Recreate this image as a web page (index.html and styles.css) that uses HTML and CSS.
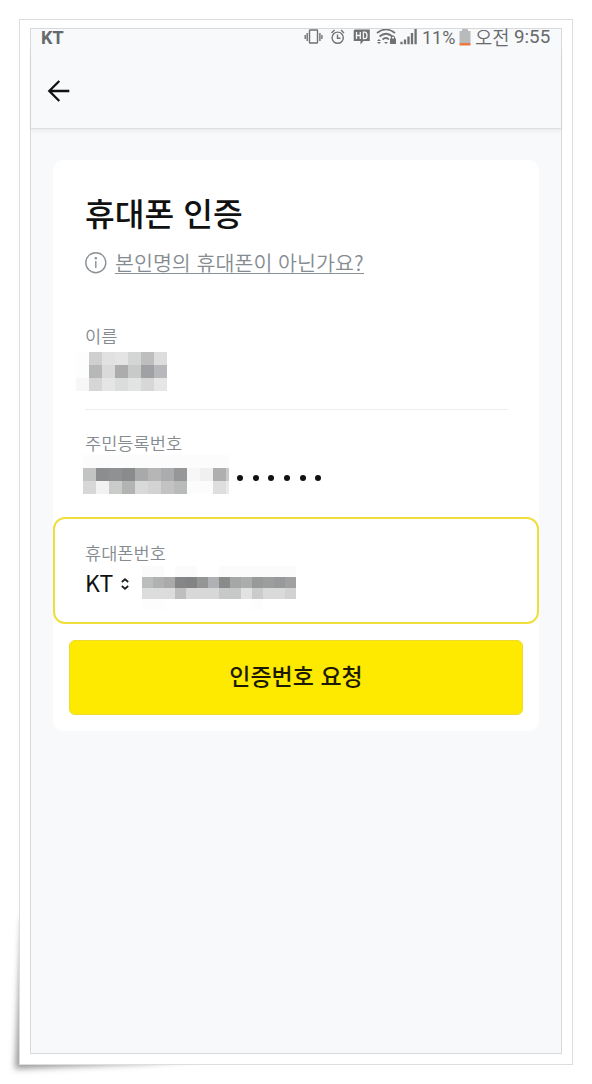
FILE: index.html
```html
<!DOCTYPE html>
<html lang="ko">
<head>
<meta charset="utf-8">
<meta name="viewport" content="width=device-width">
<title>휴대폰 인증</title>
<link rel="stylesheet" href="styles.css">
</head>
<body>
<div class="paper">
  <svg class="curl" width="260" height="184" viewBox="0 0 260 184" aria-hidden="true">
    <defs><filter id="soft" x="-20%" y="-20%" width="140%" height="140%"><feGaussianBlur stdDeviation="3"/></filter></defs>
    <path d="M22 15L15 169L150 163L200 158L30 30Z" fill="#999" filter="url(#soft)"/>
  </svg>
  <div class="mat">
    <main class="screen">
      <div class="status">
        <span class="carrier">KT</span>
        <svg class="status-icons" width="116" height="18" viewBox="0 0 116 18" fill="none" stroke="#707173" stroke-width="1.4" aria-hidden="true">
          <rect x="5.5" y="1" width="8" height="13" rx=".5"/><path d="M3.2 4v8M1.2 6v4M15.9 4v8M17.9 6v4"/>
          <circle cx="33.7" cy="8.7" r="5.6"/><path d="M33.5 5.5v3.8h3M27.5 4l3-3M37 1l3 3"/>
          <path d="M50.7 .5H65.8V12H59.5L56.5 15.5V12H49.7V1.5Z" fill="#707173" stroke="none"/>
          <path d="M52.5 3v7M56.3 3v7M52.5 6.5H56.3M59.4 3.2V9.7H60.6Q63 9.7 63 6.5T60.6 3.2Z" stroke="#f5f6f8" stroke-width="1.3"/>
          <path d="M73 4Q82-3 91 4M75.5 7.5Q82 2 88.5 7.5M78.5 10.5Q82 7.5 85 10.5" stroke-width="1.7"/>
          <path d="M80 13L82 15L84 13ZM75 10l2 2h-4ZM75 15l-2-2h4Z" fill="#707173" stroke="none"/>
          <rect x="86" y="9.5" width="6" height="5.5" fill="#707173" stroke="none"/><path d="M87.5 10V8Q89 6 90.5 8V10" stroke-width="1.1"/>
          <path d="M97.5 15.2v-2.5M101 15.2v-4.7M104.5 15.2V7.5M108 15.2V4M111.6 15.2V0" stroke-width="2.3"/>
        </svg>
        <span class="percent">11%</span>
        <svg class="battery" width="12" height="17" viewBox="0 0 12 17" aria-hidden="true"><path d="M.5 2H3V0H9V2H11.5V14H.5Z" fill="#b9babc"/><path d="M.5 14H11.5V16.5H.5Z" fill="#e9793d"/></svg>
        <span class="meridiem">오전</span>
        <span class="time">9:55</span>
      </div>
      <header class="bar">
        <svg width="24" height="24" viewBox="0 0 24 24" fill="none" stroke="#111" stroke-width="2.3" role="img" aria-label="뒤로"><path d="M22.3 12H3M12.3 2L2.3 12L12.3 22"/></svg>
      </header>
      <section class="card">
        <h1 class="title">휴대폰 인증</h1>
        <div class="help">
          <svg width="22" height="22" viewBox="0 0 22 22" fill="none" stroke="#8b9297" stroke-width="1.4" aria-hidden="true"><circle cx="10.8" cy="10.7" r="10"/><path d="M10.8 9v7"/><circle cx="10.8" cy="6.2" r=".6" fill="#8b9297"/></svg>
          <a class="link">본인명의 휴대폰이 아닌가요?</a>
        </div>
        <div class="field name">
          <div class="label">이름</div>
          <svg class="mosaic name-mosaic" width="91" height="39" viewBox="0 0 7 3" shape-rendering="crispEdges" aria-hidden="true">
            <path fill="#fdfdfd" d="M0 0h1v2H0z"/><path fill="#f7f7f7" d="M0 2h1v1H0z"/>
            <path fill="#cfcfcf" d="M1 0h1v1H1z"/><path fill="#e1e1e1" d="M2 0h1v1H2z"/><path fill="#e4e4e4" d="M3 0h1v1H3z"/><path fill="#d3d6d5" d="M4 0h1v1H4z"/><path fill="#bebebe" d="M5 0h1v1H5z"/><path fill="#ddd" d="M6 0h1v1H6z"/>
            <path fill="#b5b8b7" d="M1 1h1v1H1z"/><path fill="#dadada" d="M2 1h1v1H2z"/><path fill="#acacac" d="M3 1h1v1H3z"/><path fill="#c8cac9" d="M4 1h1v1H4z"/><path fill="#a0a1a3" d="M5 1h1v1H5z"/><path fill="#b7b8bb" d="M6 1h1v1H6z"/>
            <path fill="#d6d6d6" d="M1 2h1v1H1z"/><path fill="#e5e5e5" d="M2 2h1v1H2z"/><path fill="#dadddc" d="M3 2h1v1H3z"/><path fill="#e1e4e3" d="M4 2h1v1H4z"/><path fill="#d7d7d7" d="M5 2h1v1H5z"/><path fill="#e6e6e6" d="M6 2h1v1H6z"/>
          </svg>
        </div>
        <div class="field resident">
          <div class="label">주민등록번호</div>
          <div class="row id-row">
            <svg class="mosaic" width="146" height="39" viewBox="0 0 11.23 3" shape-rendering="crispEdges" aria-hidden="true">
              <path fill="#fcfcfc" d="M0 0h11.23v1H0zM8 2h2v1H8z"/>
              <path fill="#c2c4c4" d="M0 1h1v1H0z"/><path fill="#8c8d8f" d="M1 1h1v1H1z"/><path fill="#909192" d="M2 1h1v1H2z"/><path fill="#8a8b8d" d="M3 1h1v1H3z"/><path fill="#a8aaa9" d="M4 1h1v1H4z"/><path fill="#b6b6b7" d="M5 1h1v1H5z"/><path fill="#abacad" d="M6 1h1v1H6z"/><path fill="#969799" d="M7 1h1v1H7z"/><path fill="#f7f7f7" d="M8 1h1v1H8z"/><path fill="#f0f0f0" d="M9 1h1v1H9z"/><path fill="#afafaf" d="M10 1h1v1h-1z"/><path fill="#c9caca" d="M11 1h.23v1H11z"/>
              <path fill="#d7d7d7" d="M0 2h1v1H0z"/><path fill="#f2f2f2" d="M1 2h1v1H1z"/><path fill="#caccca" d="M2 2h1v1H2z"/><path fill="#b2b4b3" d="M3 2h1v1H3z"/><path fill="#d9d9d9" d="M4 2h1v1H4z"/><path fill="#d3d3d3" d="M5 2h1v1H5z"/><path fill="#c3c3c3" d="M6 2h1v1H6z"/><path fill="#b9bbba" d="M7 2h1v1H7z"/><path fill="#dedede" d="M10 2h1v1h-1z"/><path fill="#eaeaea" d="M11 2h.23v1H11z"/>
            </svg>
            <span class="dots"><i class="dot"></i><i class="dot"></i><i class="dot"></i><i class="dot"></i><i class="dot"></i><i class="dot"></i></span>
          </div>
        </div>
        <div class="phone">
          <div class="label">휴대폰번호</div>
          <div class="row phone-row">
            <span class="telecom">KT</span>
            <svg class="sort" width="8" height="12" viewBox="0 0 8 12" fill="none" stroke="#222" stroke-width="1.8" aria-hidden="true"><path d="M.8 4L4 1.2L7.2 4M.8 8L4 10.8L7.2 8"/></svg>
            <svg class="mosaic" width="154" height="44" viewBox="0 0 14 4" shape-rendering="crispEdges" aria-hidden="true">
              <path fill="#fbfbfb" d="M0 0h2v1H0zM3 0h2v1H3zM7 0h7v1H7z"/>
              <path fill="#fdfdfd" d="M0 3h2v1H0zM10 3h1v1h-1z"/>
              <path fill="#bbbdbc" d="M0 1h1v1H0z"/><path fill="#b0b2b1" d="M1 1h1v1H1z"/><path fill="#aaa" d="M2 1h1v1H2z"/><path fill="#858688" d="M3 1h1v1H3z"/><path fill="#838384" d="M4 1h1v1H4z"/><path fill="#949695" d="M5 1h1v1H5z"/><path fill="#b0b1b4" d="M6 1h1v1H6z"/><path fill="#8a8a8b" d="M7 1h1v1H7z"/><path fill="#a5a7a6" d="M8 1h1v1H8z"/><path fill="#abadac" d="M9 1h1v1H9z"/><path fill="#989a99" d="M10 1h1v1h-1z"/><path fill="#9c9e9d" d="M11 1h1v1h-1z"/><path fill="#98999b" d="M12 1h1v1h-1z"/><path fill="#a0a0a1" d="M13 1h1v1h-1z"/>
              <path fill="#dcdcdc" d="M0 2h3v1H0z"/><path fill="#bebebf" d="M3 2h1v1H3z"/><path fill="#d8d8d8" d="M4 2h3v1H4z"/><path fill="#c7c9c8" d="M7 2h2v1H7z"/><path fill="#e2e2e2" d="M9 2h1v1H9z"/><path fill="#cbcbcb" d="M10 2h1v1h-1z"/><path fill="#dadada" d="M11 2h2v1h-2z"/><path fill="#d2d2d2" d="M13 2h1v1h-1z"/>
            </svg>
          </div>
        </div>
        <button class="submit">인증번호 요청</button>
      </section>
    </main>
  </div>
</div>
</body>
</html>
```
FILE: styles.css
```css
* { box-sizing: border-box; }
body {
  margin: 0;
  background: #fff;
  font-family: "Noto Sans CJK KR", sans-serif;
}
.paper {
  position: relative;
  width: 592px;
  height: 1084px;
  padding: 19px;
  overflow: hidden;
}
.curl { position: absolute; left: 0; top: 900px; }
.mat {
  position: relative;
  width: 554px;
  height: 1046px;
  padding: 8px 10px 10px;
  border: 1px solid #dedede;
  background: #fff;
}
.screen {
  width: 532px;
  height: 1026px;
  border: 1px solid #d8d9da;
  background: #f7f9fb;
}
.status {
  display: flex;
  height: 18px;
  padding-left: 10px;
  color: #68696b;
  font: 18px/18px Roboto, "Noto Sans CJK KR", sans-serif;
  white-space: nowrap;
}
.carrier { width: 263px; font-weight: 700; }
.status-icons { flex: none; }
.percent { width: 35px; margin-left: 2px; }
.battery { flex: none; margin-left: 2px; }
.meridiem {
  width: 39px;
  margin-left: 4px;
  font-family: "Noto Sans CJK KR", sans-serif;
  font-size: 18.8px;
  font-weight: 350;
  line-height: 16px;
}
.time { font-size: 18.8px; line-height: 17px; }
.bar {
  height: 82px;
  padding: 32px 0 0 16px;
  border-bottom: 1px solid #dddee0;
  box-shadow: 0 2px 4px rgba(0, 0, 0, .06);
}
.bar svg { display: block; }
.card {
  width: 486px;
  height: 571px;
  margin: 31px 0 0 22px;
  border-radius: 10px;
  background: #fff;
}
.title {
  height: 86px;
  margin: 0;
  padding: 29px 0 0 32px;
  color: #111;
  font-size: 32.3px;
  font-weight: 500;
  line-height: 46px;
}
.help {
  display: flex;
  gap: 8px;
  height: 77px;
  padding: 6px 0 0 32px;
}
.help svg { flex: none; }
.link {
  align-self: flex-start;
  height: 22px;
  border-bottom: 1px solid #8b9297;
  color: #858c91;
  font-size: 20.6px;
  font-weight: 350;
  line-height: 20px;
  white-space: nowrap;
}
.label {
  color: #858c91;
  font-size: 17.6px;
  font-weight: 350;
  line-height: 26px;
}
.field { margin-left: 32px; }
.name {
  width: 423px;
  height: 87px;
  border-bottom: 1px solid #eee;
}
.mosaic { display: block; flex: none; }
.name-mosaic { margin: 3px 0 0 -9px; }
.resident { height: 107px; padding-top: 20px; }
.row { display: flex; }
.id-row { margin: -1px 0 0 -2px; }
.dots { display: flex; gap: 9.7px; padding: 20px 0 0 8px; }
.dot { width: 6px; height: 6px; border-radius: 50%; background: #111; }
.phone {
  height: 107px;
  padding: 21px 0 0 30px;
  border: 2px solid #f0de3c;
  border-radius: 12px;
}
.telecom {
  width: 36px;
  color: #111;
  font-size: 23px;
  line-height: 33px;
}
.sort { margin-top: 12px; flex: none; }
.phone-row .mosaic { margin-left: 13px; }
.submit {
  display: block;
  width: 454px;
  height: 75px;
  margin: 16px 0 0 16px;
  padding: 0 0 4px;
  border: 1px solid #f0da2b;
  border-radius: 6px;
  background: #feea00;
  color: #1c1a00;
  font: 500 23px/69px "Noto Sans CJK KR", sans-serif;
}
```
